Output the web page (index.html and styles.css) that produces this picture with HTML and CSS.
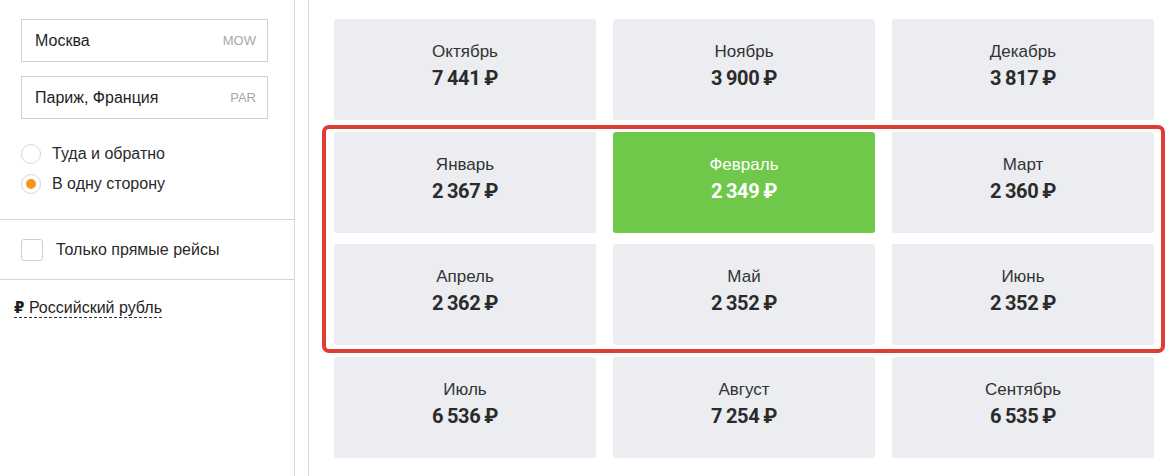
FILE: index.html
```html
<!DOCTYPE html>
<html lang="ru">
<head>
<meta charset="utf-8">
<link rel="stylesheet" href="styles.css">
</head>
<body>
<div class="page">
  <aside class="sidebar">
    <div class="section fields">
      <div class="field"><span class="city">Москва</span><span class="code">MOW</span></div>
      <div class="field"><span class="city">Париж, Франция</span><span class="code">PAR</span></div>
      <div class="radios">
        <label class="radio"><span class="dot"></span>Туда и обратно</label>
        <label class="radio on"><span class="dot"></span>В одну сторону</label>
      </div>
    </div>
    <div class="section direct">
      <span class="check"></span><span>Только прямые рейсы</span>
    </div>
    <div class="section currency">
      <span class="cur"><b>₽</b> Российский рубль</span>
    </div>
  </aside>
  <main class="main">
    <div class="grid">
      <div class="card"><div class="m">Октябрь</div><div class="p">7&#8201;441&#8201;₽</div></div>
      <div class="card"><div class="m">Ноябрь</div><div class="p">3&#8201;900&#8201;₽</div></div>
      <div class="card"><div class="m">Декабрь</div><div class="p">3&#8201;817&#8201;₽</div></div>
      <div class="card"><div class="m">Январь</div><div class="p">2&#8201;367&#8201;₽</div></div>
      <div class="card best"><div class="m">Февраль</div><div class="p">2&#8201;349&#8201;₽</div></div>
      <div class="card"><div class="m">Март</div><div class="p">2&#8201;360&#8201;₽</div></div>
      <div class="card"><div class="m">Апрель</div><div class="p">2&#8201;362&#8201;₽</div></div>
      <div class="card"><div class="m">Май</div><div class="p">2&#8201;352&#8201;₽</div></div>
      <div class="card"><div class="m">Июнь</div><div class="p">2&#8201;352&#8201;₽</div></div>
      <div class="card"><div class="m">Июль</div><div class="p">6&#8201;536&#8201;₽</div></div>
      <div class="card"><div class="m">Август</div><div class="p">7&#8201;254&#8201;₽</div></div>
      <div class="card"><div class="m">Сентябрь</div><div class="p">6&#8201;535&#8201;₽</div></div>
      <div class="highlight"></div>
    </div>
  </main>
</div>
</body>
</html>
```
FILE: styles.css
```css
* { box-sizing: border-box; }
html, body { margin: 0; padding: 0; background: #fff; }
body {
  font-family: Arial, "Liberation Sans", sans-serif;
  color: #222;
  width: 1170px;
  height: 476px;
  overflow: hidden;
}
.page {
  display: flex;
  height: 476px;
}
.sidebar {
  width: 295px;
  flex: none;
  border-right: 1px solid #d6d6d6;
}
.section {
  border-bottom: 1px solid #d6d6d6;
}
.fields {
  padding: 19px 26px 0 21px;
  height: 220px;
}
.field {
  height: 43px;
  border: 1px solid #d0d0d0;
  display: flex;
  align-items: center;
  justify-content: space-between;
  padding: 0 11px 0 13px;
  margin-bottom: 14px;
}
.city { font-size: 16px; color: #1f1f1f; }
.code { font-size: 13px; color: #a8a8a8; }
.radios {
  display: flex;
  flex-direction: column;
  gap: 10px;
  padding-top: 11px;
}
.radio {
  display: flex;
  align-items: center;
  font-size: 16px;
  color: #2a2a2a;
  height: 20px;
}
.dot {
  width: 20px;
  height: 20px;
  border: 1px solid #d6d6d6;
  border-radius: 50%;
  margin-right: 11px;
  display: flex;
  align-items: center;
  justify-content: center;
}
.radio.on .dot::after {
  content: "";
  width: 10px;
  height: 10px;
  border-radius: 50%;
  background: #f7941d;
}
.direct {
  height: 60px;
  display: flex;
  align-items: center;
  padding-left: 21px;
  font-size: 16px;
  color: #2a2a2a;
}
.check {
  width: 22px;
  height: 22px;
  border: 1px solid #cfcfcf;
  border-radius: 3px;
  margin-right: 13px;
}
.currency {
  border-bottom: none;
  padding: 19px 0 0 14px;
}
.cur {
  font-size: 16px;
  color: #1f1f1f;
  border-bottom: 1px dashed #333;
  padding-bottom: 1px;
}
.cur b { font-family: "DejaVu Sans", sans-serif; font-size: 15px; }
.main {
  margin-left: 13px;
  border-left: 1px solid #d6d6d6;
  flex: 1;
  padding: 19px 17px 0 25px;
}
.grid {
  position: relative;
  display: grid;
  grid-template-columns: repeat(3, 262px);
  grid-auto-rows: 101px;
  column-gap: 17px;
  row-gap: 11.5px;
}
.card {
  background: #ebedf0;
  border-radius: 3px;
  display: flex;
  flex-direction: column;
  align-items: center;
  padding-top: 23px;
}
.m {
  font-size: 17px;
  color: #333;
  line-height: 20px;
}
.p {
  font-family: Roboto, "Liberation Sans", sans-serif;
  font-weight: 700;
  font-size: 20px;
  line-height: 24px;
  margin-top: 4px;
  color: #2b2b2b;
  letter-spacing: -0.3px;
}
.best { background: #6fc84a; }
.best .m, .best .p { color: #fff; }
.highlight {
  position: absolute;
  left: -12px;
  top: 106px;
  width: 843px;
  height: 228px;
  border: 4px solid #e03c34;
  border-radius: 7px;
  pointer-events: none;
}
```
